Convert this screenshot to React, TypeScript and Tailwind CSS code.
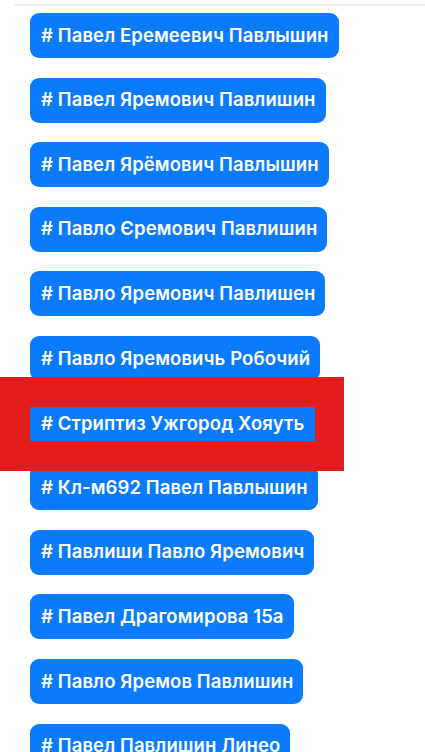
import React from "react";

// Tag chips shown under the profile search
const tags = [
  "Павел Еремеевич Павлышин",
  "Павел Яремович Павлишин",
  "Павел Ярёмович Павлышин",
  "Павло Єремович Павлишин",
  "Павло Яремович Павлишен",
  "Павло Яремовичь Робочий",
  "Стриптиз Ужгород Хояуть",
  "Кл-м692 Павел Павлышин",
  "Павлиши Павло Яремович",
  "Павел Драгомирова 15а",
  "Павло Яремов Павлишин",
  "Павел Павлишин Линео",
];

const flagged = "Стриптиз Ужгород Хояуть";

const Tag = ({ label, hidden }: { label: string; hidden?: boolean }) => (
  <div
    className={`self-start h-[45px] flex items-center pl-[11px] pr-[10px] rounded-[9px] bg-[#0b7bfe] text-white text-[18.5px] font-semibold tracking-[0.1px] whitespace-nowrap ${
      hidden ? "invisible" : ""
    }`}
  >
    # {label}
  </div>
);

export default function App() {
  return (
    <div
      className="relative w-[425px] h-[752px] overflow-hidden bg-white"
      style={{ fontFamily: "Inter, 'Noto Sans', sans-serif" }}
    >
      <div className="ml-[14px] mt-[4px] h-[2px] bg-[#f1f1f3]" />

      <div className="flex flex-col gap-[19.6px] pl-[30px] pt-[7px]">
        {tags.map((t) => (
          <Tag key={t} label={t} hidden={t === flagged} />
        ))}
      </div>

      {/* red marker over the flagged tag */}
      <div className="absolute left-0 top-[377px] w-[344px] h-[94px] bg-[#e31c1c]">
        <div className="absolute left-[30px] top-[30px] w-[285px] h-[34px] flex items-center pl-[11px] bg-[#0b7bfe] text-white text-[18.5px] font-semibold tracking-[0.1px] whitespace-nowrap">
          # {flagged}
        </div>
      </div>
    </div>
  );
}
